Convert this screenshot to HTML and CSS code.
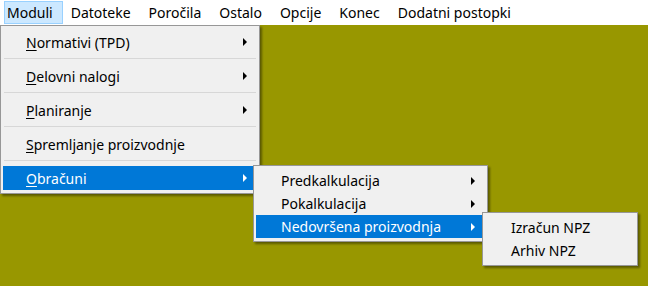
FILE: index.html
```html
<!DOCTYPE html>
<html lang="sl">
<head>
  <meta charset="UTF-8">
  <title>Moduli</title>
  <link rel="stylesheet" href="styles.css">
</head>
<body>
  <!-- Glavni meni -->
  <div class="menubar">
    <span class="bar-item active">Moduli</span>
    <span class="bar-item">Datoteke</span>
    <span class="bar-item">Poročila</span>
    <span class="bar-item">Ostalo</span>
    <span class="bar-item">Opcije</span>
    <span class="bar-item">Konec</span>
    <span class="bar-item">Dodatni postopki</span>
  </div>

  <div class="desktop">
    <!-- Moduli -->
    <div class="popup popup-moduli">
      <div class="item sub"><span><u>N</u>ormativi (TPD)</span></div>
      <div class="sep"></div>
      <div class="item sub"><span><u>D</u>elovni nalogi</span></div>
      <div class="sep"></div>
      <div class="item sub"><span><u>P</u>laniranje</span></div>
      <div class="sep"></div>
      <div class="item"><span><u>S</u>premljanje proizvodnje</span></div>
      <div class="sep"></div>
      <div class="item sub selected"><span><u>O</u>bračuni</span></div>
    </div>

    <!-- Obračuni -->
    <div class="popup popup-obracuni">
      <div class="item sub"><span>Predkalkulacija</span></div>
      <div class="item sub"><span>Pokalkulacija</span></div>
      <div class="item sub selected"><span>Nedovršena proizvodnja</span></div>
    </div>

    <!-- Nedovršena proizvodnja -->
    <div class="popup popup-npz">
      <div class="item"><span>Izračun NPZ</span></div>
      <div class="item"><span>Arhiv NPZ</span></div>
    </div>
  </div>
</body>
</html>
```

FILE: styles.css
```css
/* Splosno */
body {
  margin: 0;
  font-family: "Noto Sans", "Open Sans", sans-serif;
  font-size: 14px;
  color: #000;
  background-color: #989700;
  overflow: hidden;
}

/* Menijska vrstica */
.menubar {
  display: flex;
  height: 25px;
  padding-left: 4px;
  background-color: #fff;
}
.bar-item {
  display: flex;
  align-items: center;
  height: 23px;
  margin-top: 1px;
  padding: 0 9px 0 7px;
  border: 1px solid transparent;
  box-sizing: border-box;
  white-space: nowrap;
}
.bar-item.active {
  padding-left: 2px;
  background-color: #cce8ff;
  border-color: #99d1ff;
}

.desktop {
  position: relative;
  height: 261px;
}

/* Pojavni meniji */
.popup {
  position: absolute;
  background-color: #f0f0f0;
  border: 1px solid #979797;
  padding: 3px 2px;
  box-shadow: 2px 2px 2px rgba(0, 0, 0, 0.4);
  white-space: nowrap;
}
.popup-moduli {
  left: 0;
  top: 0;
  width: 254px;
  padding-top: 4px;
}
.popup-obracuni {
  left: 253px;
  top: 140px;
  width: 229px;
}
.popup-npz {
  left: 482px;
  top: 187px;
  width: 150px;
}

.item {
  display: flex;
  align-items: center;
  height: 24px;
  padding-left: 23px;
  position: relative;
}
.popup-obracuni .item,
.popup-npz .item {
  height: 23px;
  padding-left: 25px;
}
.popup-npz .item {
  padding-left: 26px;
}
.item u {
  text-decoration-thickness: 1px;
  text-underline-offset: 2px;
}
.item.sub::after {
  content: "";
  position: absolute;
  right: 10px;
  top: 50%;
  margin-top: -4px;
  border-left: 4px solid #000;
  border-top: 4px solid transparent;
  border-bottom: 4px solid transparent;
}
.item.selected {
  background-color: #0078d7;
  color: #fff;
}
.item.selected::after {
  border-left-color: #fff;
}

.sep {
  height: 1px;
  margin: 4px 1px 5px 1px;
  background-color: #d7d7d7;
}
```
